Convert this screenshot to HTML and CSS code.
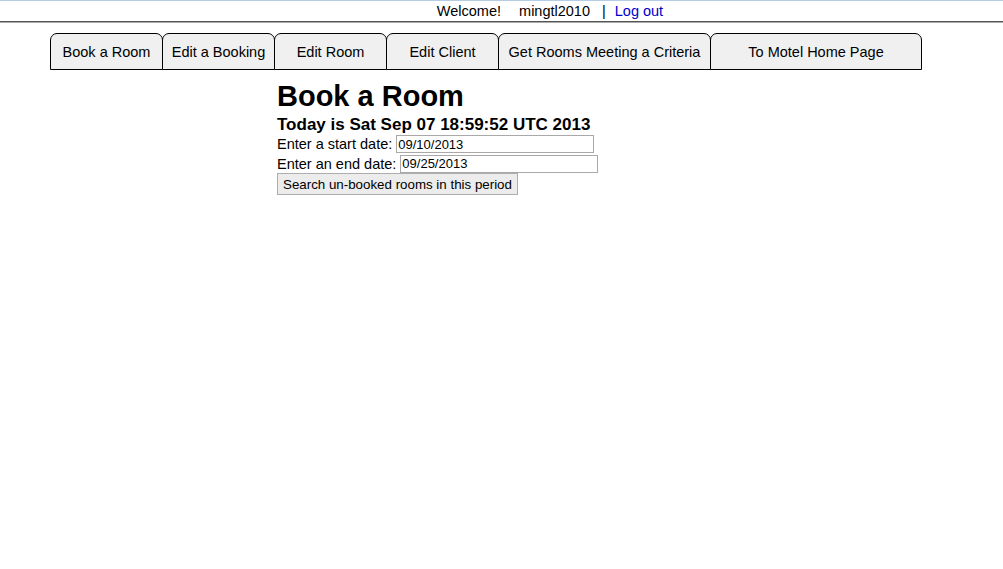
FILE: index.html
```html
<!DOCTYPE html>
<html>
<head>
<meta charset="utf-8">
<title>Book a Room</title>
<link rel="stylesheet" href="styles.css">
</head>
<body>
<div class="topbar">
  <span class="welcome">Welcome!</span>
  <span class="user">mingtl2010</span>
  <span class="sep">|</span>
  <a class="logout" href="#">Log out</a>
</div>
<nav class="tabs">
  <a class="tab w1" href="#">Book a Room</a>
  <a class="tab w1" href="#">Edit a Booking</a>
  <a class="tab w1" href="#">Edit Room</a>
  <a class="tab w1" href="#">Edit Client</a>
  <a class="tab w2" href="#">Get Rooms Meeting a Criteria</a>
  <a class="tab w3" href="#">To Motel Home Page</a>
</nav>
<main class="content">
  <h1 class="title">Book a Room</h1>
  <h2 class="today">Today is Sat Sep 07 18:59:52 UTC 2013</h2>
  <div class="row r1"><label>Enter a start date:</label><input class="date" type="text" value="09/10/2013"></div>
  <div class="row r2"><label>Enter an end date:</label><input class="date" type="text" value="09/25/2013"></div>
  <button class="search" type="button">Search un-booked rooms in this period</button>
</main>
</body>
</html>
```
FILE: styles.css
```css
html, body {
  margin: 0;
  padding: 0;
  background: #fff;
}
body {
  font-family: "Liberation Sans", Arial, sans-serif;
  color: #000;
}
.topbar {
  border-top: 1px solid #b4cce6;
  border-bottom: 1px solid #555;
  box-shadow: 0 1px 0 #aaa;
  display: flex;
  justify-content: center;
  padding-left: 97px;
  font-size: 14.5px;
  line-height: 19px;
  height: 19px;
  padding-top: 1px;
  box-sizing: content-box;
}
.welcome { margin-right: 18px; }
.sep { margin: 0 9px 0 12px; }
.logout {
  color: #0000cc;
  text-decoration: none;
}
.tabs {
  display: flex;
  margin: 11px 0 0 50px;
}
.tab {
  display: block;
  box-sizing: border-box;
  height: 37px;
  padding-top: 1px;
  line-height: 35px;
  border: 1px solid #000;
  border-radius: 7px 7px 0 0;
  background: #f0f0f0;
  color: #000;
  text-decoration: none;
  text-align: center;
  font-size: 14.5px;
  margin-left: -1px;
}
.tab:first-child { margin-left: 0; }
.w1 { width: 113px; }
.w2 { width: 213px; }
.w3 { width: 212px; }
.content {
  margin: 9px 0 0 277px;
}
.title {
  margin: 0;
  font-size: 29px;
  line-height: 34px;
  font-weight: bold;
}
.today {
  margin: 2px 0 0;
  font-size: 17px;
  line-height: 19px;
  font-weight: bold;
}
.row {
  display: flex;
  align-items: center;
  font-size: 14.5px;
}
.r1 { height: 20px; }
.r2 { height: 19px; }
.row label { margin-right: 4px; }
.date {
  box-sizing: border-box;
  width: 198px;
  height: 18px;
  border: 1px solid #a9a9a9;
  padding: 0 1px;
  margin: 0;
  font-family: "Liberation Sans", Arial, sans-serif;
  font-size: 13px;
  color: #000;
  background: #fff;
  outline: none;
}
.search {
  display: block;
  margin-top: 0;
  box-sizing: border-box;
  width: 241px;
  height: 22px;
  padding: 0 5px;
  border: 1px solid #adadad;
  background: #ececec;
  font-family: "Liberation Sans", Arial, sans-serif;
  font-size: 13.33px;
  color: #000;
  text-align: left;
}
```
